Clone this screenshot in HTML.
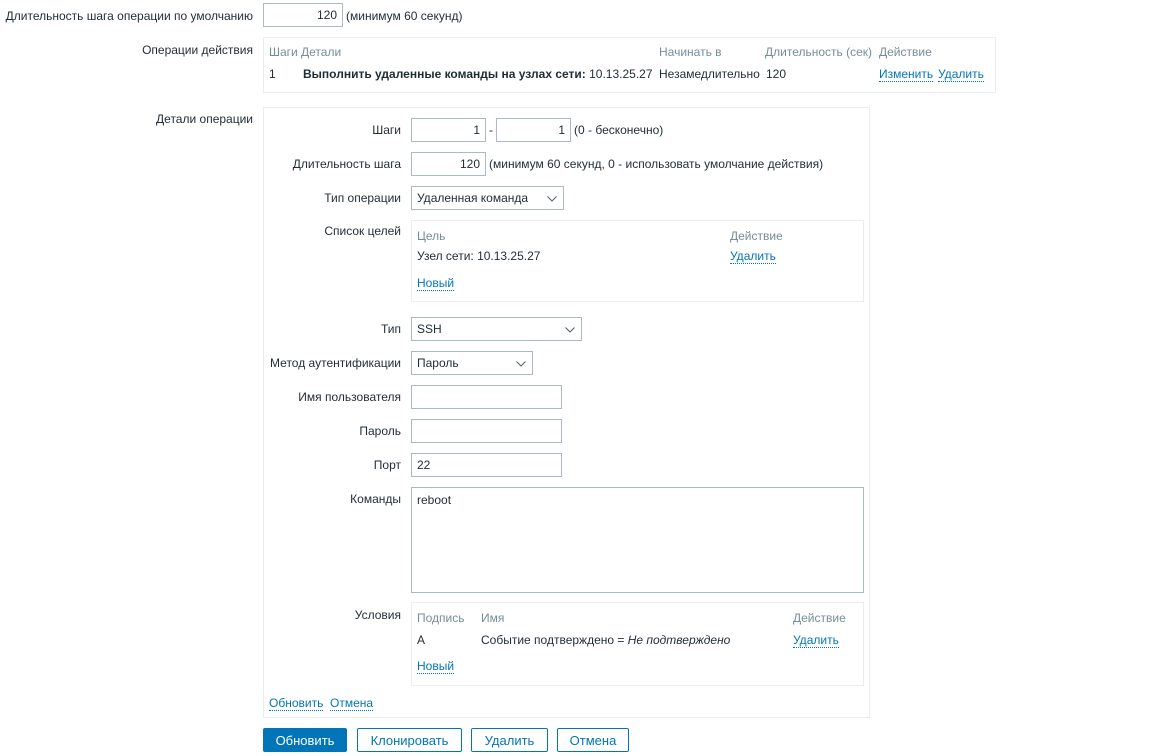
<!DOCTYPE html>
<html><head><meta charset="utf-8"><style>
body{margin:0;width:1152px;height:756px;background:#fff;position:relative;overflow:hidden;font-family:"Liberation Sans",Arial,sans-serif;font-size:12px;color:#1f2c33}
.t{position:absolute;white-space:nowrap;line-height:14px;margin-top:1px}
.r{text-align:right}
.g{color:#768d99}
.a{color:#0275b8;border-bottom:1px dotted #0275b8;line-height:13px}
.b{position:absolute;box-sizing:border-box;border:1px solid #ebeef0;background:#fff}
.in{position:absolute;box-sizing:border-box;border:1px solid #acbbc2;background:#fff;line-height:23px;padding:0 5px;white-space:nowrap}
.num{text-align:right}
.sel svg{position:absolute;right:6px;top:9px}
.btn{position:absolute;box-sizing:border-box;top:728px;height:24px;border:1px solid #0275b8;color:#0275b8;background:#fff;text-align:center;line-height:23px;font-size:13px;border-radius:2px}
</style></head><body>

<div class="t r" style="right:899px;top:8px">Длительность шага операции по умолчанию</div>
<div class="in num" style="left:263px;top:3px;width:80px;height:24px">120</div>
<div class="t" style="left:346px;top:8px">(минимум 60 секунд)</div>

<div class="t r" style="right:899px;top:42px">Операции действия</div>
<div class="b" style="left:263px;top:37px;width:733px;height:56px"></div>
<div class="t g" style="left:269px;top:44px">Шаги</div>
<div class="t g" style="left:301px;top:44px">Детали</div>
<div class="t g" style="left:659px;top:44px">Начинать в</div>
<div class="t g" style="left:765px;top:44px">Длительность (сек)</div>
<div class="t g" style="left:879px;top:44px">Действие</div>
<div class="t" style="left:269px;top:66px">1</div>
<div class="t" style="left:303px;top:66px"><b>Выполнить удаленные команды на узлах сети:</b> 10.13.25.27</div>
<div class="t" style="left:659px;top:66px">Незамедлительно</div>
<div class="t" style="left:766px;top:66px">120</div>
<div class="t a" style="left:879px;top:67px">Изменить</div>
<div class="t a" style="left:938px;top:67px">Удалить</div>

<div class="t r" style="right:899px;top:111px">Детали операции</div>
<div class="b" style="left:263px;top:107px;width:607px;height:611px"></div>

<div class="t r" style="right:751px;top:122px">Шаги</div>
<div class="in num" style="left:411px;top:118px;width:75px;height:24px">1</div>
<div class="t" style="left:489px;top:122px">-</div>
<div class="in num" style="left:496px;top:118px;width:75px;height:24px">1</div>
<div class="t" style="left:574px;top:122px">(0 - бесконечно)</div>

<div class="t r" style="right:751px;top:156px">Длительность шага</div>
<div class="in num" style="left:411px;top:152px;width:75px;height:24px">120</div>
<div class="t" style="left:489px;top:156px">(минимум 60 секунд, 0 - использовать умолчание действия)</div>

<div class="t r" style="right:751px;top:190px">Тип операции</div>
<div class="in sel" style="left:411px;top:186px;width:153px;height:24px">Удаленная команда<svg width="10" height="6"><path d="M0.5 0.5L5 5L9.5 0.5" stroke="#4f5f68" fill="none"/></svg></div>

<div class="t r" style="right:751px;top:223px">Список целей</div>
<div class="b" style="left:411px;top:220px;width:453px;height:82px"></div>
<div class="t g" style="left:417px;top:228px">Цель</div>
<div class="t g" style="left:730px;top:228px">Действие</div>
<div class="t" style="left:417px;top:248px">Узел сети: 10.13.25.27</div>
<div class="t a" style="left:730px;top:249px">Удалить</div>
<div class="t a" style="left:417px;top:276px">Новый</div>

<div class="t r" style="right:751px;top:321px">Тип</div>
<div class="in sel" style="left:411px;top:317px;width:171px;height:24px">SSH<svg width="10" height="6"><path d="M0.5 0.5L5 5L9.5 0.5" stroke="#4f5f68" fill="none"/></svg></div>

<div class="t r" style="right:751px;top:355px">Метод аутентификации</div>
<div class="in sel" style="left:411px;top:351px;width:122px;height:24px">Пароль<svg width="10" height="6"><path d="M0.5 0.5L5 5L9.5 0.5" stroke="#4f5f68" fill="none"/></svg></div>

<div class="t r" style="right:751px;top:389px">Имя пользователя</div>
<div class="in" style="left:411px;top:385px;width:151px;height:24px"></div>
<div class="t r" style="right:751px;top:423px">Пароль</div>
<div class="in" style="left:411px;top:419px;width:151px;height:24px"></div>
<div class="t r" style="right:751px;top:457px">Порт</div>
<div class="in" style="left:411px;top:453px;width:151px;height:24px">22</div>

<div class="t r" style="right:751px;top:491px">Команды</div>
<div class="in" style="left:411px;top:487px;width:453px;height:106px;line-height:14px;padding-top:5px">reboot</div>

<div class="t r" style="right:751px;top:607px">Условия</div>
<div class="b" style="left:411px;top:602px;width:453px;height:84px"></div>
<div class="t g" style="left:417px;top:610px">Подпись</div>
<div class="t g" style="left:481px;top:610px">Имя</div>
<div class="t g" style="left:793px;top:610px">Действие</div>
<div class="t" style="left:417px;top:632px">A</div>
<div class="t" style="left:481px;top:632px">Событие подтверждено = <i>Не подтверждено</i></div>
<div class="t a" style="left:793px;top:633px">Удалить</div>
<div class="t a" style="left:417px;top:659px">Новый</div>

<div class="t a" style="left:269px;top:696px">Обновить</div>
<div class="t a" style="left:330px;top:696px">Отмена</div>

<div class="btn" style="left:263px;width:84px;background:#0275b8;color:#fff">Обновить</div>
<div class="btn" style="left:357px;width:105px">Клонировать</div>
<div class="btn" style="left:471px;width:77px">Удалить</div>
<div class="btn" style="left:557px;width:72px">Отмена</div>
</body></html>
